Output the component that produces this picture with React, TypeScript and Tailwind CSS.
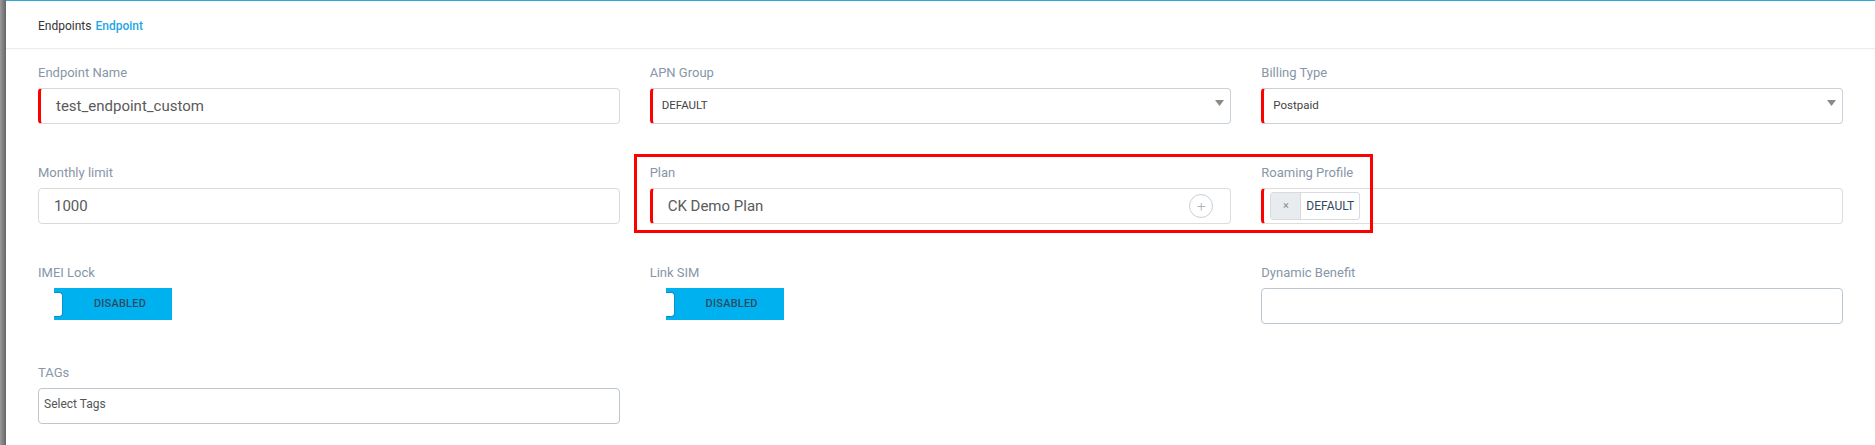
import { ReactNode } from "react";

const font = { fontFamily: "Roboto, 'Open Sans', sans-serif" };

function Label({ children }: { children: ReactNode }) {
  return <div className="text-[13px] leading-[18px] text-[#8796a8] mb-[6px]">{children}</div>;
}

function Caret() {
  return (
    <svg width="9" height="6" viewBox="0 0 9 6" className="mb-[7px] shrink-0">
      <path d="M0 0h9L4.5 6z" fill="#8a8a8a" />
    </svg>
  );
}

function Toggle() {
  return (
    <div className="relative ml-[16px] mt-[1px] w-[118px] h-[32px] bg-[#00b1ef] flex items-center justify-center pl-[14px]">
      <div className="absolute left-0 top-[4px] w-[9px] h-[25px] bg-white rounded-r-[4px] border border-l-0 border-[#0b8fc4]" />
      <span className="text-[11px] font-medium text-[#2e4a62] tracking-[0.2px]">DISABLED</span>
    </div>
  );
}

export default function App() {
  return (
    <div className="flex w-full h-[445px] bg-white overflow-hidden" style={font}>
      {/* left rail */}
      <div className="w-[6px] shrink-0 bg-gradient-to-r from-[#9a9a9a] to-[#666666]" />

      <div className="flex-1 flex flex-col border-t border-[#2aa9df]">
        <header className="h-[48px] shrink-0 flex items-center pl-[32px] pt-[2px] border-b border-[#ededed] shadow-[0_1px_2px_rgba(0,0,0,0.03)]">
          <span className="text-[12px] text-[#333]">Endpoints</span>
          <span className="text-[12px] text-[#1ea7e4] font-medium ml-[4px]">Endpoint</span>
        </header>

        <div className="relative flex-1 pl-[32px] pr-[32px] pt-[15px]">
          <div className="grid grid-cols-3 gap-x-[30px] gap-y-[40px]">
            {/* row 1 */}
            <div>
              <Label>Endpoint Name</Label>
              <div className="h-[36px] flex items-center pl-[15px] border border-[#d9d9d9] border-l-[3px] border-l-[#ff0000] rounded-[4px] text-[15px] text-[#5a5a5a]">
                test_endpoint_custom
              </div>
            </div>
            <div>
              <Label>APN Group</Label>
              <div className="h-[36px] flex items-center justify-between pl-[9px] pr-[6px] border border-[#c9d1d9] border-l-[3px] border-l-[#ff0000] rounded-[4px] text-[11.5px] text-[#444]">
                <span>DEFAULT</span>
                <Caret />
              </div>
            </div>
            <div>
              <Label>Billing Type</Label>
              <div className="h-[36px] flex items-center justify-between pl-[9px] pr-[6px] border border-[#c9d1d9] border-l-[3px] border-l-[#ff0000] rounded-[4px] text-[11.5px] text-[#444]">
                <span>Postpaid</span>
                <Caret />
              </div>
            </div>

            {/* row 2 */}
            <div>
              <Label>Monthly limit</Label>
              <div className="h-[36px] flex items-center pl-[15px] border border-[#d9d9d9] rounded-[4px] text-[15px] text-[#5a5a5a]">
                1000
              </div>
            </div>
            <div>
              <Label>Plan</Label>
              <div className="h-[36px] flex items-center justify-between pl-[15px] pr-[17px] border border-[#dddddd] border-l-[3px] border-l-[#ff0000] rounded-[4px] text-[15px] text-[#5a5a5a]">
                <span>CK Demo Plan</span>
                <div className="w-[24px] h-[24px] rounded-full border border-[#c8cfd6] flex items-center justify-center text-[#aab3bc] text-[15px] leading-none font-light">
                  +
                </div>
              </div>
            </div>
            <div>
              <Label>Roaming Profile</Label>
              <div className="h-[36px] flex items-center pl-[6px] border border-[#dddddd] border-l-[3px] border-l-[#ff0000] rounded-[4px]">
                <div className="h-[28px] flex items-stretch border border-[#d5dbe1] rounded-[3px] overflow-hidden">
                  <div className="w-[30px] bg-[#e9ecef] border-r border-[#d5dbe1] flex items-center justify-center text-[11px] text-[#8a8a8a]">
                    ×
                  </div>
                  <div className="flex items-center pl-[5px] pr-[5px] text-[12px] text-[#34495e]">DEFAULT</div>
                </div>
              </div>
            </div>

            {/* row 3 */}
            <div>
              <Label>IMEI Lock</Label>
              <Toggle />
            </div>
            <div>
              <Label>Link SIM</Label>
              <Toggle />
            </div>
            <div>
              <Label>Dynamic Benefit</Label>
              <div className="h-[36px] border border-[#bcc6cf] rounded-[4px]" />
            </div>

            {/* row 4 */}
            <div>
              <Label>TAGs</Label>
              <div className="h-[36px] pl-[5px] pt-[7px] border border-[#bcc6cf] rounded-[4px] text-[12px] leading-[16px] text-[#555]">
                Select Tags
              </div>
            </div>
          </div>

          {/* annotation box */}
          <div className="absolute left-[628px] top-[105px] w-[739px] h-[79px] border-[3px] border-[#ff0000] pointer-events-none" />
        </div>
      </div>
    </div>
  );
}
